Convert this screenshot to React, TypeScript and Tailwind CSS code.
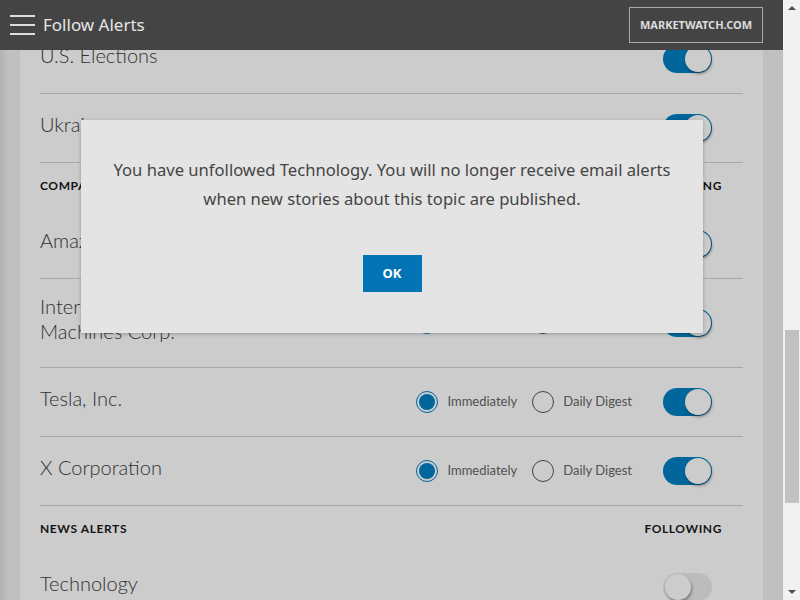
import React from "react"

type Row = {
  name: string[]
  on: boolean
  radios?: boolean
  h?: string
}

const TOPICS: Row[] = [
  { name: ["U.S. Elections"], on: true },
  { name: ["Ukraine"], on: true },
]

const COMPANIES: Row[] = [
  { name: ["Amazon.com Inc."], on: true, radios: true },
  { name: ["International Business", "Machines Corp."], on: true, radios: true, h: "h-[89px]" },
  { name: ["Tesla, Inc."], on: true, radios: true },
  { name: ["X Corporation"], on: true, radios: true },
]

const NEWS: Row[] = [{ name: ["Technology"], on: false }]

function Toggle({ on }: { on: boolean }) {
  return (
    <div
      className={
        "relative w-[49px] h-[28px] rounded-full " + (on ? "bg-[#0080c3]" : "bg-[#ebebeb]")
      }
    >
      <div
        className={
          "absolute top-[1px] w-[26px] h-[26px] rounded-full bg-white shadow-[1px_2px_3px_rgba(0,0,0,0.35)] " +
          (on ? "right-[1px]" : "left-[2px]")
        }
      />
    </div>
  )
}

function Radio({ checked, label }: { checked: boolean; label: string }) {
  return (
    <div className="flex items-center">
      {checked ? (
        <div className="w-[22px] h-[22px] rounded-full border-[1.5px] border-[#0080c3] flex items-center justify-center">
          <div className="w-[16px] h-[16px] rounded-full bg-[#0080c3]" />
        </div>
      ) : (
        <div className="w-[22px] h-[22px] rounded-full border-[1.5px] border-[#555]" />
      )}
      <span className="ml-[9px] text-[13px] text-[#666] leading-none -mt-[2px]">{label}</span>
    </div>
  )
}

function AlertRow({ row }: { row: Row }) {
  return (
    <div
      className={
        "flex items-center justify-between border-b border-[#d2d2d2] " + (row.h ?? "h-[69px]")
      }
    >
      <div className="text-[20px] leading-[25px] text-[#404040] font-light -mt-[8px]">
        {row.name.map((line) => (
          <div key={line}>{line}</div>
        ))}
      </div>
      <div className="flex items-center">
        {row.radios && (
          <div className="flex items-center gap-[15px] mr-[31px]">
            <Radio checked label="Immediately" />
            <Radio checked={false} label="Daily Digest" />
          </div>
        )}
        <div className="mr-[31px]">
          <Toggle on={row.on} />
        </div>
      </div>
    </div>
  )
}

function SectionHeader({ title }: { title: string }) {
  return (
    <div className="h-[47px] pt-[16px] flex items-start justify-between text-[12px] leading-[14px] font-bold tracking-[0.6px] text-[#1a1a1a]">
      <span>{title}</span>
      <span className="mr-[21px]">FOLLOWING</span>
    </div>
  )
}

export default function App() {
  return (
    <div className="w-[800px] h-[600px] flex overflow-hidden font-['Lato',sans-serif]">
      <div className="relative flex-1 h-full overflow-hidden bg-[linear-gradient(to_right,#dedede_0px,#f0f0f0_8px,#f0f0f0_100%)]">
        {/* header */}
        <header className="absolute top-0 inset-x-0 h-[50px] bg-[#444] z-30 flex items-center justify-between">
          <div className="flex items-center">
            <div className="ml-[10px] w-[25px] flex flex-col gap-[7px]">
              <div className="h-[2px] bg-[#ddd]" />
              <div className="h-[2px] bg-[#ddd]" />
              <div className="h-[2px] bg-[#ddd]" />
            </div>
            <span className="ml-[8px] text-[17px] text-[#e6e6e6] font-['Noto_Sans',sans-serif] -mt-[1px]">
              Follow Alerts
            </span>
          </div>
          <div className="mr-[20px] h-[36px] w-[134px] border border-[#aaa] flex items-center justify-center text-[11px] font-bold text-[#ddd] font-['Noto_Sans',sans-serif]">
            MARKETWATCH.COM
          </div>
        </header>

        {/* list */}
        <div className="mx-[20px] bg-white px-[20px] pt-[25px] h-[700px]">
          {TOPICS.map((r) => (
            <AlertRow key={r.name[0]} row={r} />
          ))}
          <SectionHeader title="COMPANIES" />
          {COMPANIES.map((r) => (
            <AlertRow key={r.name[0]} row={r} />
          ))}
          <SectionHeader title="NEWS ALERTS" />
          {NEWS.map((r) => (
            <AlertRow key={r.name[0]} row={r} />
          ))}
        </div>

        {/* dim overlay */}
        <div className="absolute inset-0 bg-black/20 z-10" />

        {/* modal */}
        <div className="absolute z-20 top-[120px] left-[81px] w-[622px] h-[213px] bg-[#e4e4e4] shadow-[0_1px_4px_rgba(0,0,0,0.25)] flex flex-col items-center pt-[35px] font-['Noto_Sans',sans-serif]">
          <p className="text-[16.6px] leading-[29px] text-[#444] text-center">
            You have unfollowed Technology. You will no longer receive email alerts
            <br />
            when new stories about this topic are published.
          </p>
          <button
            type="button"
            className="mt-[42px] w-[59px] h-[37px] bg-[#0274b6] text-white text-[13px] font-bold"
          >
            OK
          </button>
        </div>
      </div>

      {/* scrollbar */}
      <div className="w-[17px] h-full bg-[#f1f1f1] flex flex-col items-center">
        <div className="mt-[6px] w-0 h-0 border-l-[4px] border-r-[4px] border-b-[4px] border-l-transparent border-r-transparent border-b-[#505050]" />
        <div className="mt-[320px] w-[14px] h-[173px] bg-[#c1c1c1]" />
        <div className="mt-auto mb-[6px] w-0 h-0 border-l-[4px] border-r-[4px] border-t-[4px] border-l-transparent border-r-transparent border-t-[#505050]" />
      </div>
    </div>
  )
}
